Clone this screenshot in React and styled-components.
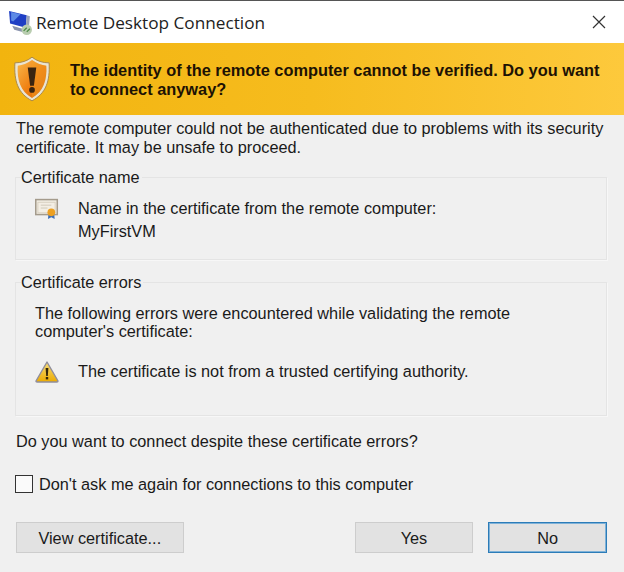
import styled, { createGlobalStyle } from 'styled-components';

const GlobalStyle = createGlobalStyle`
    html, body {
        margin: 0;
        padding: 0;
        background: #f0f0f0;
    }
`;

const Dialog = styled.div`
    width: 624px;
    height: 572px;
    overflow: hidden;
    background: #f0f0f0;
    color: #1a1a1a;
    font-family: "Liberation Sans", Arial, sans-serif;
    font-size: 16.3px;
    border-top: 1px solid #555;
    box-sizing: border-box;
`;

const TitleBar = styled.div`
    height: 42px;
    background: #fff;
    display: flex;
    align-items: center;
    padding: 0 18px 0 8px;
    gap: 3px;
`;

const Title = styled.span`
    flex: 1;
    font-family: "Open Sans", "Noto Sans", sans-serif;
    font-size: 17.2px;
    color: #222;
`;

const Banner = styled.div`
    height: 72px;
    box-sizing: border-box;
    display: flex;
    align-items: center;
    gap: 18px;
    padding: 0 14px 0 13px;
    background: linear-gradient(90deg, #f2b40f 0%, #f6bc1e 50%, #fdc93c 100%);
`;

const BannerText = styled.div`
    font-weight: bold;
    font-size: 16.35px;
    line-height: 19px;
    color: #1d1204;
    padding-top: 1px;
`;

const Body = styled.div`
    padding: 4px 17px 0 16px;
`;

const Intro = styled.p`
    margin: 0;
    line-height: 19px;
`;

const Group = styled.section`
    position: relative;
    box-sizing: border-box;
    height: ${p => p.$height}px;
    margin: ${p => p.$top}px 0 0 -1px;
    padding: ${p => p.$pad}px 18px 0 19px;
    border: 1px solid #e4e4e4;
    box-shadow: 1px 1px 0 #f7f7f7;
`;

const Legend = styled.span`
    position: absolute;
    top: -10px;
    left: 5px;
    padding-right: 2px;
    line-height: 19px;
    background: #f0f0f0;
`;

const IconRow = styled.div`
    display: flex;
    align-items: flex-start;
    gap: 19px;
    line-height: 23px;
`;

const IconSlot = styled.div`
    width: 24px;
    height: 23px;
    flex: none;
    display: flex;
    align-items: center;
    justify-content: center;
`;

const Text = styled.p`
    margin: 0 0 ${p => p.$after || 0}px;
    line-height: 18px;
`;

const Question = styled.p`
    margin: 16px 0 0;
    line-height: 19px;
`;

const CheckRow = styled.label`
    display: flex;
    align-items: center;
    gap: 6px;
    margin: 24px 0 0 -1px;
    height: 18px;
`;

const Box = styled.span`
    width: 18px;
    height: 18px;
    box-sizing: border-box;
    border: 1px solid #333;
    background: #fafafa;
`;

const Buttons = styled.div`
    display: flex;
    margin: 29px 0 0;
    gap: 15px;
`;

const Button = styled.button`
    height: 31px;
    width: ${p => p.$width}px;
    margin-left: ${p => p.$gap || 0}px;
    box-sizing: border-box;
    background: #e2e2e2;
    border: 1px solid ${p => (p.$focus ? '#2c7cb8' : '#cdcdcd')};
    box-shadow: ${p => (p.$focus ? 'inset 0 0 0 1px #7fb2d8' : 'none')};
    font: inherit;
    color: #1a1a1a;
    padding: 1px 0 0;
`;

const AppIcon = () => (
    <svg width="25" height="25" viewBox="0 0 24 24" style={{ flex: 'none' }}>
        <path d="M1 1 L18 5 L17 17 L2 13 Z" fill="#1f3fc4" />
        <path d="M3 2 L12 4 L5 11 L3 10 Z" fill="#5d8ae6" />
        <path d="M18 5 L21 6 L20 18 L17 17 Z" fill="#9aa3b8" />
        <path d="M4 15 L14 18 L14 21 L6 19 Z" fill="#8a93ad" />
        <circle cx="18" cy="19" r="5" fill="#b9cdb0" />
        <path d="M15 20 L18 17 M18 21 L21 18" stroke="#4a8a44" strokeWidth="1.2" />
    </svg>
);

const ShieldIcon = () => (
    <svg width="38" height="46" viewBox="0 0 40 48" style={{ flex: 'none', marginRight: 1 }}>
        <defs>
            <linearGradient id="shield" x1="0" y1="0" x2="1" y2="1">
                <stop offset="0" stopColor="#f9b84a" />
                <stop offset="0.55" stopColor="#ef7f12" />
                <stop offset="1" stopColor="#d96c0b" />
            </linearGradient>
        </defs>
        <path d="M20 1 C25 5 31 7 38 7 C39 26 35 39 20 47 C5 39 1 26 2 7 C9 7 15 5 20 1 Z" fill="#e9e4d3" stroke="#a8864a" strokeWidth="1" />
        <path d="M20 4 C25 8 30 9 35 10 C36 25 32 37 20 44 C8 37 4 25 5 10 C10 9 15 8 20 4 Z" fill="url(#shield)" />
        <path d="M20 4 L20 44 C32 37 36 25 35 10 C30 9 25 8 20 4 Z" fill="#f4a52c" opacity="0.35" />
        <path d="M15.5 12 L24.5 12 L22 31 L18 31 Z" fill="#3a2410" />
        <circle cx="20" cy="35.5" r="3" fill="#3a2410" />
    </svg>
);

const CertIcon = () => (
    <svg width="25" height="22" viewBox="0 0 25 22">
        <rect x="0.8" y="1.2" width="22.4" height="15.6" fill="#f3eee4" stroke="#a49b8c" strokeWidth="1.6" />
        <rect x="3" y="4" width="18" height="11" fill="none" stroke="#d8d0c0" />
        <path d="M6 7 H17 M6 10 H13" stroke="#cfc8b9" />
        <path d="M14 16 L13.5 21.5 L17 19.5 L20.5 21.5 L20 16 Z" fill="#3f6fb5" />
        <circle cx="17" cy="14.5" r="4" fill="#eda021" />
    </svg>
);

const WarningIcon = () => (
    <svg width="24" height="22" viewBox="0 0 24 22">
        <defs>
            <linearGradient id="warn" x1="0" y1="0" x2="0" y2="1">
                <stop offset="0" stopColor="#f5dc7a" />
                <stop offset="1" stopColor="#ecab00" />
            </linearGradient>
        </defs>
        <path d="M12 1 L23 20 Q23 21 22 21 L2 21 Q1 21 1 20 Z" fill="url(#warn)" stroke="#8f8d9c" strokeWidth="1.4" strokeLinejoin="round" />
        <path d="M10.6 7 H13.4 L12.8 15 H11.2 Z" fill="#33260a" />
        <rect x="10.8" y="16" width="2.4" height="2.4" fill="#33260a" />
    </svg>
);

const CloseIcon = () => (
    <svg width="14" height="14" viewBox="0 0 14 14">
        <path d="M1 1 L13 13 M13 1 L1 13" stroke="#333" strokeWidth="1.2" />
    </svg>
);

export default function App() {
    return (
        <Dialog>
            <GlobalStyle />
            <TitleBar>
                <AppIcon />
                <Title>Remote Desktop Connection</Title>
                <CloseIcon />
            </TitleBar>
            <Banner>
                <ShieldIcon />
                <BannerText>
                    The identity of the remote computer cannot be verified. Do you want to connect anyway?
                </BannerText>
            </Banner>
            <Body>
                <Intro>
                    The remote computer could not be authenticated due to problems with its security certificate. It may be unsafe to proceed.
                </Intro>
                <Group $top={20} $height={83} $pad={19}>
                    <Legend>Certificate name</Legend>
                    <IconRow>
                        <IconSlot><CertIcon /></IconSlot>
                        <div>
                            Name in the certificate from the remote computer:
                            <br />
                            MyFirstVM
                        </div>
                    </IconRow>
                </Group>
                <Group $top={22} $height={134} $pad={21}>
                    <Legend>Certificate errors</Legend>
                    <Text $after={20}>
                        The following errors were encountered while validating the remote computer's certificate:
                    </Text>
                    <IconRow>
                        <IconSlot><WarningIcon /></IconSlot>
                        <div>The certificate is not from a trusted certifying authority.</div>
                    </IconRow>
                </Group>
                <Question>Do you want to connect despite these certificate errors?</Question>
                <CheckRow>
                    <Box />
                    Don't ask me again for connections to this computer
                </CheckRow>
                <Buttons>
                    <Button $width={168}>View certificate...</Button>
                    <Button $width={119} $gap={156}>Yes</Button>
                    <Button $width={119} $focus>No</Button>
                </Buttons>
            </Body>
        </Dialog>
    );
}
